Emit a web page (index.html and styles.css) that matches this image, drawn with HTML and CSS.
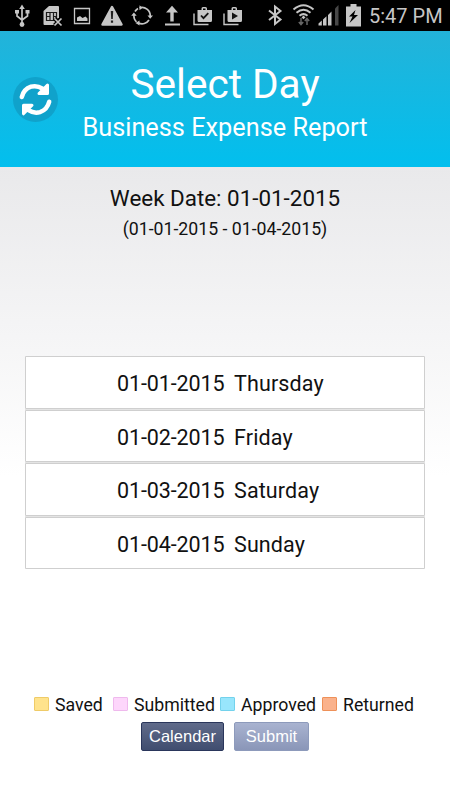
FILE: index.html
```html
<!DOCTYPE html>
<html lang="en">
<head>
    <meta charset="UTF-8">
    <meta name="viewport" content="width=device-width, initial-scale=1.0">
    <title>Business Expense Report</title>
    <link rel="stylesheet" href="styles.css">
</head>
<body>
    <div class="status-bar">
        <div class="notifications">
            <!-- usb -->
            <svg width="30" height="31" viewBox="0 0 30 31" fill="none" stroke="#c6c6c6" stroke-width="1.700">
                <path d="M15 8v16M10 12v4l5 4M20.500 12v4l-5.500 4"/>
                <path d="M15 4.500l2.800 4.500h-5.600zM8 10h4v3.500H8zM18.500 10h4v3.500h-4z" fill="#c6c6c6" stroke="none"/>
                <circle cx="15" cy="24.500" r="2.400" fill="#c6c6c6" stroke="none"/>
            </svg>
            <!-- sim card -->
            <svg width="30" height="31" viewBox="0 0 30 31">
                <path d="M12 6h9q1 0 1 1v11l-3 1v6H7.500q-1 0-1-1V11z" fill="#c6c6c6"/>
                <path d="M9 12.500h10.500M9 20.500h7M9.500 12v9M13 12v9M16.500 12v9M9 16.500h4M16.500 16.500h3M19.500 12v6" fill="none" stroke="#1b1b1b" stroke-width="1.200"/>
                <path d="M17.500 18.500l7 7M24.500 18.500l-7 7" stroke="#000" stroke-width="4"/>
                <path d="M17.500 18.500l7 7M24.500 18.500l-7 7" stroke="#c6c6c6" stroke-width="1.700"/>
            </svg>
            <!-- image -->
            <svg width="30" height="31" viewBox="0 0 30 31">
                <path d="M7.500 8.500h15v15h-15z" fill="none" stroke="#c6c6c6" stroke-width="1.300"/>
                <path d="M10 21v-3.500l3-1.500 2.500 2 3-1.500 2 2V21z" fill="#c6c6c6"/>
            </svg>
            <!-- warning -->
            <svg width="30" height="31" viewBox="0 0 30 31">
                <path d="M15 7l9.500 17.500h-19z" fill="#c6c6c6" stroke="#c6c6c6" stroke-width="2.500" stroke-linejoin="round"/>
                <path d="M13.800 11h2.400l-.4 8h-1.600zM13.900 20.500h2.200v2.200h-2.200z" fill="#222"/>
            </svg>
            <!-- sync -->
            <svg width="30" height="31" viewBox="0 0 30 31" fill="none" stroke="#c6c6c6" stroke-width="1.700">
                <path d="M12.500 7.800a8.200 8.200 0 0 1 10.700 8.200M22 20a8.200 8.200 0 0 1-10.500 3M9.500 21.800a8.200 8.200 0 0 1-2.500-7M8 11.500a8.200 8.200 0 0 1 3-3"/>
                <path d="M20.500 15.500h5.500l-2.800 3.300zM12.500 20.500v5l-4-2.500zM4.200 15.700h5.500l-2.800-3.300zM12.500 5.300v5l3-2.600z" fill="#c6c6c6" stroke="none"/>
            </svg>
            <!-- upload -->
            <svg width="30" height="31" viewBox="0 0 30 31">
                <path d="M15 5.800l6 6.700h-4.300v9h-3.400v-9H9zM8 23.500h15v2H8z" fill="#c6c6c6"/>
            </svg>
            <!-- store updates -->
            <svg width="30" height="31" viewBox="0 0 30 31">
                <path d="M10.500 10h4V8.500q0-1.500 1.500-1.500h2.500q1.500 0 1.500 1.500V10H25v10.500q0 1.500-1.500 1.500H12q-1.500 0-1.500-1.500zM16 8.500V10h2.500V8.500z" fill="#c6c6c6" fill-rule="evenodd"/>
                <path d="M7 13.500v11h14.500" fill="none" stroke="#c6c6c6" stroke-width="1.400"/>
                <path d="M14 15.500l2.500 2.700 4.800-5" fill="none" stroke="#111" stroke-width="1.800"/>
            </svg>
            <svg width="30" height="31" viewBox="0 0 30 31">
                <path d="M10.500 10h4V8.500q0-1.500 1.500-1.500h2.500q1.500 0 1.500 1.500V10H25v10.500q0 1.500-1.500 1.500H12q-1.500 0-1.500-1.500zM16 8.500V10h2.500V8.500z" fill="#c6c6c6" fill-rule="evenodd"/>
                <path d="M7 13.500v11h14.500" fill="none" stroke="#c6c6c6" stroke-width="1.400"/>
                <path d="M15 12.500l6 3.500-6 3.500z" fill="#111"/>
            </svg>
        </div>
        <div class="system">
            <!-- bluetooth -->
            <svg width="30" height="31" viewBox="0 0 30 31">
                <path d="M9 10.500l11.500 9-5.500 4.500V6.500l5.500 4.500-11.500 9" fill="none" stroke="#c6c6c6" stroke-width="2"/>
            </svg>
            <!-- wifi -->
            <svg width="27" height="31" viewBox="0 0 27 31">
                <path d="M3.500 9.500q10-8.500 20 0M6.500 12.800q7-6 14 0M9.500 15.800q4-3.300 8 0" fill="none" stroke="#c6c6c6" stroke-width="2"/>
                <path d="M13.500 15.800l2 1.500-2 2-2-2z" fill="#c6c6c6"/>
                <path d="M11 18v6M8.800 22l2.200 2.500 2.200-2.500M17 25v-6M14.800 21l2.200-2.500 2.200 2.500" fill="none" stroke="#666" stroke-width="1.500"/>
            </svg>
            <!-- signal -->
            <svg width="25" height="31" viewBox="0 0 25 31">
                <path d="M1.500 25.500v-2l3.300-3v5zM6 25.500v-6l3.500-3.200v9.200zM11 25.500V15l3.500-3.500v14z" fill="#c6c6c6"/>
                <path d="M18 25.500V8.500l3.500-3.500v20.500z" fill="#484848"/>
            </svg>
            <!-- battery -->
            <svg width="23" height="31" viewBox="0 0 23 31">
                <path d="M8.500 4h6v2.500h4.500v20H4v-20h4.500z" fill="#c6c6c6"/>
                <path d="M13.500 10l-6.500 6.500h3.500l-3 6.500 8.500-8h-4z" fill="#000"/>
            </svg>
            <span class="clock">5:47 PM</span>
        </div>
    </div>

    <header>
        <button type="button" class="refresh" aria-label="Refresh">
            <svg width="45" height="45" viewBox="0 0 45 45">
                <path d="M8.800 20q2-8 9.200-10.300 6-1.700 11.500 2" fill="none" stroke="#fff" stroke-width="4.500" stroke-linecap="round"/>
                <path d="M34.500 8v8.500h-8.500z" fill="#fff" stroke="#fff" stroke-width="3" stroke-linejoin="round"/>
                <path d="M36.200 24.800q-2 8-9.200 10.300-6 1.700-11.500-2" fill="none" stroke="#fff" stroke-width="4.500" stroke-linecap="round"/>
                <path d="M10.500 36.800v-8.500h8.500z" fill="#fff" stroke="#fff" stroke-width="3" stroke-linejoin="round"/>
            </svg>
        </button>
        <h1>Select Day</h1>
        <h2>Business Expense Report</h2>
    </header>

    <main>
        <div class="week">
            <p class="week-date">Week Date: 01-01-2015</p>
            <p class="week-range">(01-01-2015 - 01-04-2015)</p>
        </div>

        <ul class="day-list">
            <li><span class="date">01-01-2015</span><span class="day">Thursday</span></li>
            <li><span class="date">01-02-2015</span><span class="day">Friday</span></li>
            <li><span class="date">01-03-2015</span><span class="day">Saturday</span></li>
            <li><span class="date">01-04-2015</span><span class="day">Sunday</span></li>
        </ul>

        <div class="legend">
            <span class="legend-item saved">Saved</span>
            <span class="legend-item submitted">Submitted</span>
            <span class="legend-item approved">Approved</span>
            <span class="legend-item returned">Returned</span>
        </div>

        <div class="actions">
            <button type="button" class="btn btn-calendar">Calendar</button>
            <button type="button" class="btn btn-submit">Submit</button>
        </div>
    </main>
</body>
</html>
```
FILE: styles.css
```css
*, *::before {
    box-sizing: border-box;
}
body {
    margin: 0;
    height: 800px;
    display: flex;
    flex-direction: column;
    font-family: Roboto, "Liberation Sans", sans-serif;
    color: #111;
    background-color: #fff;
    overflow: hidden;
}
svg {
    display: block;
    flex: none;
}
.status-bar {
    height: 31px;
    display: flex;
    justify-content: space-between;
    padding: 0 8px 0 7px;
    background-color: #000;
}
.notifications, .system {
    display: flex;
}
.clock {
    width: 77px;
    padding-left: 4px;
    font-size: 20px;
    line-height: 32px;
    white-space: nowrap;
    color: #c6c6c6;
}
header {
    position: relative;
    height: 136px;
    padding-top: 29px;
    text-align: center;
    color: #fff;
    background: linear-gradient(#23b3d9, #02bfee);
}
h1, h2 {
    margin: 0;
    font-weight: 400;
}
h1 {
    font-size: 40.6px;
    line-height: 48px;
}
h2 {
    font-size: 25.3px;
    line-height: 40px;
}
.refresh {
    position: absolute;
    left: 13px;
    top: 46px;
    width: 45px;
    height: 45px;
    padding: 0;
    border: none;
    border-radius: 50%;
    background-color: #10a2cb;
}
main {
    flex: 1;
    padding: 15px 25px 0;
    background: linear-gradient(#e9e9eb, #fff 310px);
}
.week {
    height: 174px;
    text-align: center;
}
.week p {
    margin: 0;
}
.week-date {
    font-size: 22.4px;
    line-height: 32px;
}
.week-range {
    font-size: 17.7px;
    line-height: 30px;
}
.day-list {
    display: grid;
    grid-template-rows: repeat(4, 1fr);
    gap: 1px;
    height: 213px;
    margin: 0;
    padding: 0;
    list-style: none;
    background-color: #e4e4e4;
}
.day-list li {
    display: flex;
    align-items: center;
    padding: 3px 0 0 91px;
    border: 1px solid #cfcfcf;
    border-radius: 1px;
    background-color: #fff;
    font-size: 21.5px;
}
.date {
    width: 117px;
    letter-spacing: -0.1px;
}
.day {
    letter-spacing: 0.12px;
}
.legend {
    display: grid;
    grid-template-columns: 79px 107px 102px auto;
    margin: 123px 0 0 9px;
    font-size: 17.7px;
    line-height: 26px;
}
.legend-item {
    display: flex;
    align-items: center;
    gap: 6px;
    white-space: nowrap;
}
.legend-item::before {
    content: "";
    width: 15px;
    height: 14px;
    flex: none;
    margin-top: -2px;
    border: 1px solid;
    border-radius: 1px;
}
.saved::before {
    background-color: #ffe38c;
    border-color: #efcb68;
}
.submitted::before {
    background-color: #fdd6fb;
    border-color: #efb9ed;
}
.approved::before {
    background-color: #98e6fc;
    border-color: #73d2ec;
}
.returned::before {
    background-color: #fab28c;
    border-color: #ee9159;
}
.actions {
    display: flex;
    gap: 10px;
    margin: 4px 0 0 116px;
}
.btn {
    height: 29px;
    padding: 0;
    border-radius: 2px;
    font-family: "Liberation Sans", Arial, sans-serif;
    font-size: 16.5px;
    color: #fff;
}
.btn-calendar {
    width: 83px;
    border: 1px solid #2a365b;
    background: linear-gradient(#606b8a, #404d6f);
}
.btn-submit {
    width: 75px;
    border: 1px solid #8d9abb;
    background: linear-gradient(#a9b3d0, #8a96b8);
}
```
